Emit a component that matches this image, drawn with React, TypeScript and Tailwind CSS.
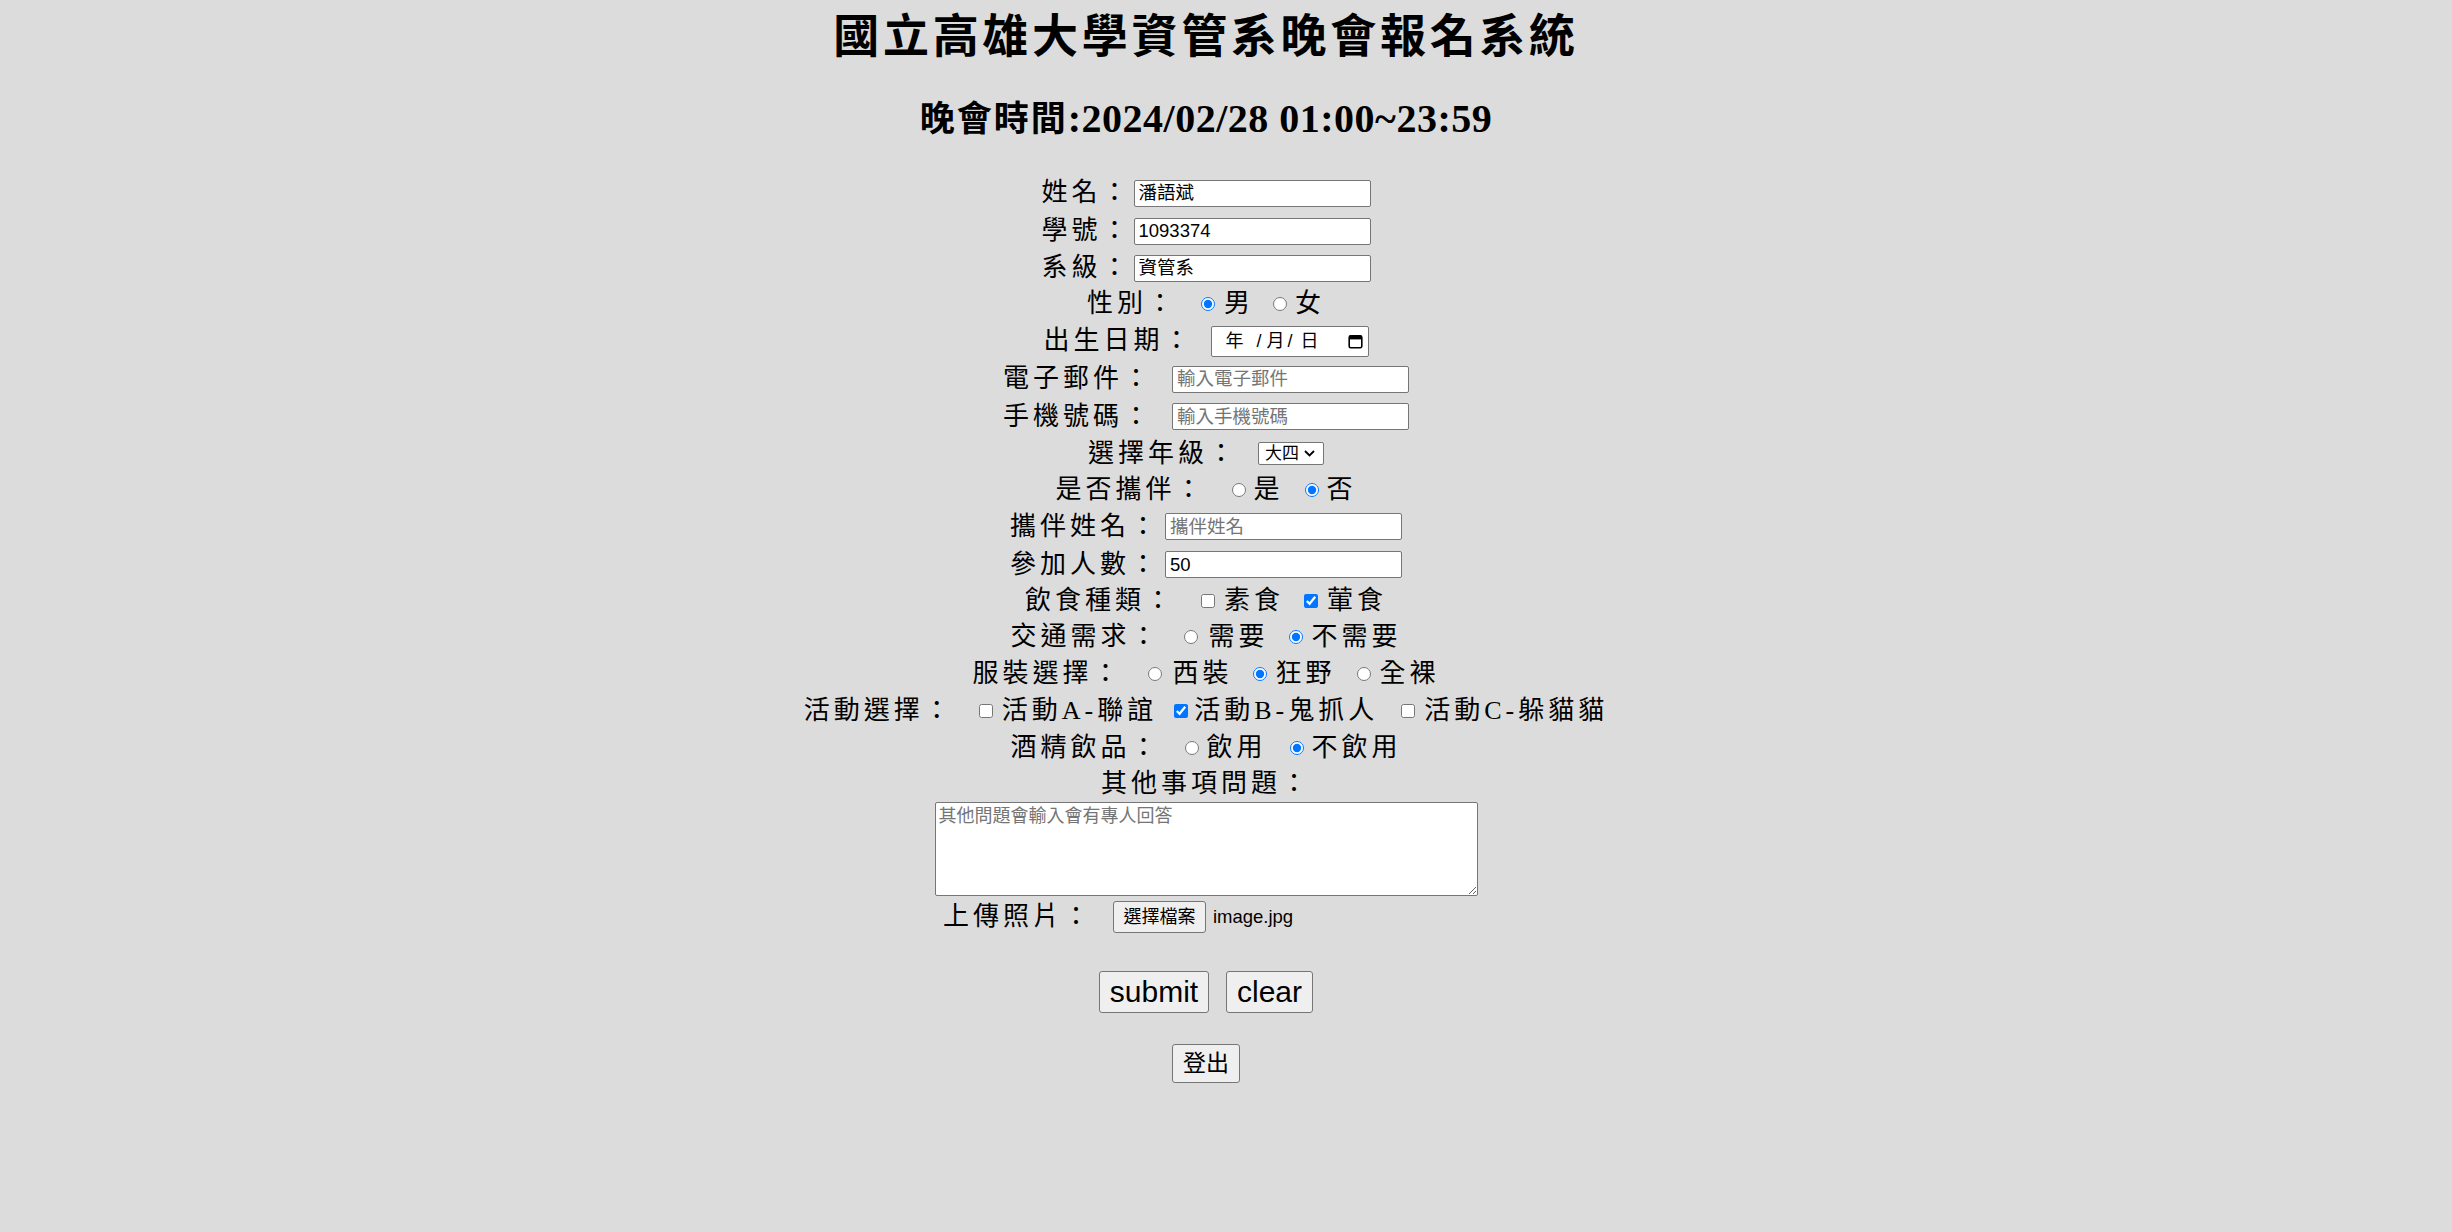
import { useState } from 'react'

const lbl =
  "font-['Liberation_Serif','Noto_Sans_CJK_TC',serif] text-[26px] leading-[36px] tracking-[4px] text-black whitespace-nowrap"
const field =
  "h-[27px] w-[237px] rounded-[2px] border border-[#767676] bg-white px-[4px] font-['Liberation_Sans','Noto_Sans_CJK_TC',sans-serif] text-[18.5px] tracking-normal text-black outline-none placeholder:text-[#757575]"
const btn =
  "rounded-[3px] border border-[#767676] bg-[#efefef] font-['Liberation_Sans','Noto_Sans_CJK_TC',sans-serif] tracking-normal text-black"
const tick = 'm-0 h-[14px] w-[14px] shrink-0'

function CalendarIcon() {
  return (
    <svg width="15" height="15" viewBox="0 0 15 15">
      <rect x="1.2" y="1.8" width="12.6" height="12" rx="1.6" fill="none" stroke="black" strokeWidth="1.6" />
      <rect x="1.2" y="1.8" width="12.6" height="3.6" fill="black" />
    </svg>
  )
}

export default function App() {
  const [sex, setSex] = useState('male')
  const [partner, setPartner] = useState('no')
  const [traffic, setTraffic] = useState('no')
  const [dress, setDress] = useState('wild')
  const [alcohol, setAlcohol] = useState('no')

  return (
    <div className="min-h-screen bg-[#dcdcdc] pr-[40px] text-black">
      <h1 className="flex h-[63px] items-center justify-center font-['Noto_Sans_CJK_TC',sans-serif] text-[46px] font-bold leading-none tracking-[3.7px]">
        國立高雄大學資管系晚會報名系統
      </h1>
      <h2 className="mt-[36px] flex h-[40px] items-center justify-center font-['Liberation_Serif','Noto_Sans_CJK_TC',serif] font-bold leading-none">
        <span className="text-[35px] tracking-[2px]">晚會時間</span>
        <span className="text-[40px] tracking-[0.5px]">:2024/02/28 01:00~23:59</span>
      </h2>

      <form className="mt-[35px] flex flex-col" onSubmit={(e) => e.preventDefault()}>
        <div className="flex h-[38px] items-center justify-center">
          <span className={lbl}>姓名：</span>
          <input className={`ml-[2px] ${field}`} defaultValue="潘語斌" />
        </div>
        <div className="flex h-[38px] items-center justify-center">
          <span className={lbl}>學號：</span>
          <input className={`ml-[2px] ${field}`} defaultValue="1093374" />
        </div>
        <div className="flex h-[36px] items-center justify-center">
          <span className={lbl}>系級：</span>
          <input className={`ml-[2px] ${field}`} defaultValue="資管系" />
        </div>

        <div className="flex h-[36px] items-center justify-center">
          <span className={lbl}>性別：</span>
          <input type="radio" className={`ml-[24px] ${tick}`} checked={sex === 'male'} onChange={() => setSex('male')} />
          <span className={`ml-[9px] ${lbl}`}>男</span>
          <input type="radio" className={`ml-[19px] ${tick}`} checked={sex === 'female'} onChange={() => setSex('female')} />
          <span className={`ml-[8px] ${lbl}`}>女</span>
        </div>

        <div className="flex h-[38px] items-center justify-center">
          <span className={lbl}>出生日期：</span>
          <div className="ml-[17px] flex h-[31px] w-[158px] items-center rounded-[2px] border border-[#767676] bg-white pl-[14px] pr-[5px] font-['Liberation_Sans','Noto_Sans_CJK_TC',sans-serif] text-[18px]">
            <span>年</span>
            <span className="ml-[13px]">/</span>
            <span className="ml-[5px]">月</span>
            <span className="ml-[3px]">/</span>
            <span className="ml-[8px]">日</span>
            <span className="ml-auto">
              <CalendarIcon />
            </span>
          </div>
        </div>

        <div className="flex h-[38px] items-center justify-center">
          <span className={lbl}>電子郵件：</span>
          <input className={`ml-[19px] ${field}`} placeholder="輸入電子郵件" />
        </div>
        <div className="flex h-[37px] items-center justify-center">
          <span className={lbl}>手機號碼：</span>
          <input className={`ml-[19px] ${field}`} placeholder="輸入手機號碼" />
        </div>

        <div className="flex h-[37px] items-center justify-center">
          <span className={lbl}>選擇年級：</span>
          <div className="ml-[20px] flex h-[23px] w-[66px] items-center rounded-[2px] border border-[#767676] bg-white pl-[6px] font-['Liberation_Sans','Noto_Sans_CJK_TC',sans-serif] text-[17px] leading-none">
            <span>大四</span>
            <svg className="ml-[5px]" width="11" height="7" viewBox="0 0 11 7">
              <path d="M1 1l4.5 4.5L10 1" fill="none" stroke="black" strokeWidth="1.8" />
            </svg>
          </div>
        </div>

        <div className="flex h-[35px] items-center justify-center">
          <span className={lbl}>是否攜伴：</span>
          <input type="radio" className={`ml-[27px] ${tick}`} checked={partner === 'yes'} onChange={() => setPartner('yes')} />
          <span className={`ml-[7px] ${lbl}`}>是</span>
          <input type="radio" className={`ml-[21px] ${tick}`} checked={partner === 'no'} onChange={() => setPartner('no')} />
          <span className={`ml-[8px] ${lbl}`}>否</span>
        </div>

        <div className="flex h-[39px] items-center justify-center">
          <span className={lbl}>攜伴姓名：</span>
          <input className={`ml-[5px] ${field}`} placeholder="攜伴姓名" />
        </div>
        <div className="flex h-[37px] items-center justify-center">
          <span className={lbl}>參加人數：</span>
          <input className={`ml-[5px] ${field}`} defaultValue="50" />
        </div>

        <div className="flex h-[36px] items-center justify-center">
          <span className={lbl}>飲食種類：</span>
          <input type="checkbox" className={`ml-[26px] ${tick}`} />
          <span className={`ml-[9px] ${lbl}`}>素食</span>
          <input type="checkbox" className={`ml-[20px] ${tick}`} defaultChecked />
          <span className={`ml-[9px] ${lbl}`}>葷食</span>
        </div>

        <div className="flex h-[36px] items-center justify-center">
          <span className={lbl}>交通需求：</span>
          <input type="radio" className={`ml-[24px] ${tick}`} checked={traffic === 'yes'} onChange={() => setTraffic('yes')} />
          <span className={`ml-[10px] ${lbl}`}>需要</span>
          <input type="radio" className={`ml-[20px] ${tick}`} checked={traffic === 'no'} onChange={() => setTraffic('no')} />
          <span className={`ml-[9px] ${lbl}`}>不需要</span>
        </div>

        <div className="flex h-[37px] items-center justify-center">
          <span className={lbl}>服裝選擇：</span>
          <input type="radio" className={`ml-[26px] ${tick}`} checked={dress === 'suit'} onChange={() => setDress('suit')} />
          <span className={`ml-[10px] ${lbl}`}>西裝</span>
          <input type="radio" className={`ml-[20px] ${tick}`} checked={dress === 'wild'} onChange={() => setDress('wild')} />
          <span className={`ml-[9px] ${lbl}`}>狂野</span>
          <input type="radio" className={`ml-[21px] ${tick}`} checked={dress === 'nude'} onChange={() => setDress('nude')} />
          <span className={`ml-[9px] ${lbl}`}>全裸</span>
        </div>

        <div className="flex h-[38px] items-center justify-center">
          <span className={lbl}>活動選擇：</span>
          <input type="checkbox" className={`ml-[25px] ${tick}`} />
          <span className={`ml-[9px] ${lbl}`}>活動A-聯誼</span>
          <input type="checkbox" className={`ml-[17px] ${tick}`} defaultChecked />
          <span className={`ml-[6px] ${lbl}`}>活動B-鬼抓人</span>
          <input type="checkbox" className={`ml-[23px] ${tick}`} />
          <span className={`ml-[9px] ${lbl}`}>活動C-躲貓貓</span>
        </div>

        <div className="flex h-[36px] items-center justify-center">
          <span className={lbl}>酒精飲品：</span>
          <input type="radio" className={`ml-[25px] ${tick}`} checked={alcohol === 'yes'} onChange={() => setAlcohol('yes')} />
          <span className={`ml-[7px] ${lbl}`}>飲用</span>
          <input type="radio" className={`ml-[23px] ${tick}`} checked={alcohol === 'no'} onChange={() => setAlcohol('no')} />
          <span className={`ml-[8px] ${lbl}`}>不飲用</span>
        </div>

        <div className="flex h-[36px] items-center justify-center">
          <span className={lbl}>其他事項問題：</span>
        </div>
        <div className="flex justify-center">
          <textarea
            className="h-[94px] w-[543px] rounded-[2px] border border-[#767676] bg-white px-[3px] py-[2px] font-['Liberation_Sans','Noto_Sans_CJK_TC',sans-serif] text-[18px] leading-[22px] text-black outline-none placeholder:text-[#757575]"
            placeholder="其他問題會輸入會有專人回答"
          />
        </div>

        <div className="flex h-[42px] items-center justify-center pr-[176px]">
          <span className={lbl}>上傳照片：</span>
          <button type="button" className={`ml-[20px] h-[32px] w-[93px] text-[18px] ${btn}`}>
            選擇檔案
          </button>
          <span className="ml-[7px] font-['Liberation_Sans','Noto_Sans_CJK_TC',sans-serif] text-[18.5px]">image.jpg</span>
        </div>

        <div className="mt-[33px] flex justify-center gap-[17px]">
          <button type="submit" className={`h-[42px] w-[110px] text-[30px] leading-none ${btn}`}>
            submit
          </button>
          <button type="reset" className={`h-[42px] w-[87px] text-[30px] leading-none ${btn}`}>
            clear
          </button>
        </div>

        <div className="mt-[31px] flex justify-center">
          <button type="button" className={`h-[39px] w-[68px] text-[23px] leading-none ${btn}`}>
            登出
          </button>
        </div>
      </form>
    </div>
  )
}
